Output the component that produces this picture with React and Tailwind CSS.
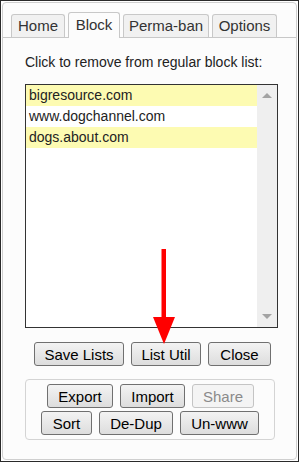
import React from "react";

function Btn({ children, className = "", disabled = false }) {
  return (
    <button
      className={
        "h-[24px] rounded-[3px] border text-[15px] leading-none flex items-center justify-center whitespace-nowrap " +
        (disabled
          ? "border-[#c4c4c4] bg-[#f4f4f4] text-[#8a8a8a] "
          : "border-[#707070] bg-gradient-to-b from-[#f3f3f3] to-[#dddddd] text-black ") +
        className
      }
      style={{ fontFamily: '"Liberation Sans", Arial, sans-serif' }}
    >
      {children}
    </button>
  );
}

function Tab({ children, active, className = "" }) {
  return (
    <div
      className={
        "rounded-t-[3px] border border-b-0 text-[15px] flex items-center justify-center whitespace-nowrap " +
        (active
          ? "border-[#c8c8c8] bg-[#fcfcfc] h-[26px] text-[#333] relative top-[1px] -mt-[2px]"
          : "border-[#c8c8c8] bg-[#f1f1f1] h-[23px] text-[#333]") +
        " " +
        className
      }
    >
      {children}
    </div>
  );
}

export default function App() {
  const rows = [
    { t: "bigresource.com", y: true },
    { t: "www.dogchannel.com", y: false },
    { t: "dogs.about.com", y: true },
  ];
  return (
    <div
      className="w-[299px] h-[462px] border border-[#2a2a2a] bg-white p-[1px]"
      style={{ fontFamily: '"Liberation Sans", Arial, sans-serif' }}
    >
      <div className="h-full w-full rounded-[4px] border border-[#cfcfcf] bg-[#fcfcfc] flex flex-col relative">
        {/* tabs */}
        <div className="flex items-end gap-[3px] pl-[8px] pt-[11px] border-b border-[#c8c8c8] h-[35px]">
          <Tab className="w-[54px]">Home</Tab>
          <Tab active className="w-[52px]">Block</Tab>
          <Tab className="w-[86px]">Perma-ban</Tab>
          <Tab className="w-[65px]">Options</Tab>
        </div>

        <div className="pl-[22px] pr-[20px] flex flex-col">
          <div className="mt-[16px] text-[14px] leading-[16px] text-[#222]">
            Click to remove from regular block list:
          </div>

          {/* list box */}
          <div className="mt-[14px] w-[253px] h-[244px] border border-[#333] bg-white flex">
            <div className="flex-1 flex flex-col text-[14px] text-[#222]">
              {rows.map((r) => (
                <div
                  key={r.t}
                  className={
                    "h-[21px] pl-[3px] flex items-center " +
                    (r.y ? "bg-[#fdfbb2]" : "bg-white")
                  }
                >
                  {r.t}
                </div>
              ))}
            </div>
            <div className="w-[20px] bg-[#efefef] flex flex-col items-center justify-between py-[8px]">
              <div className="w-0 h-0 border-l-[5px] border-r-[5px] border-b-[5px] border-l-transparent border-r-transparent border-b-[#a3a3a3]" />
              <div className="w-0 h-0 border-l-[5px] border-r-[5px] border-t-[5px] border-l-transparent border-r-transparent border-t-[#a3a3a3]" />
            </div>
          </div>

          {/* main buttons */}
          <div className="mt-[14px] flex gap-[7px] pl-[9px]">
            <Btn className="w-[90px]">Save Lists</Btn>
            <Btn className="w-[70px]">List Util</Btn>
            <Btn className="w-[63px]">Close</Btn>
          </div>

          {/* group */}
          <div className="mt-[13px] w-[250px] h-[61px] rounded-[4px] border border-[#d4d4d4] flex flex-col items-center pt-[4px] gap-[3px]">
            <div className="flex gap-[7px] pl-[1px]">
              <Btn className="w-[66px]">Export</Btn>
              <Btn className="w-[65px]">Import</Btn>
              <Btn disabled className="w-[62px]">Share</Btn>
            </div>
            <div className="flex gap-[7px]">
              <Btn className="w-[51px]">Sort</Btn>
              <Btn className="w-[74px]">De-Dup</Btn>
              <Btn className="w-[79px]">Un-www</Btn>
            </div>
          </div>
        </div>

        {/* red arrow annotation */}
        <svg
          className="absolute left-[148px] top-[246px]"
          width="26"
          height="98"
          viewBox="0 0 26 98"
        >
          <rect x="10.5" y="0" width="4.5" height="72" fill="#ff0000" />
          <polygon points="2,68 24,68 13,95" fill="#ff0000" />
        </svg>
      </div>
    </div>
  );
}
